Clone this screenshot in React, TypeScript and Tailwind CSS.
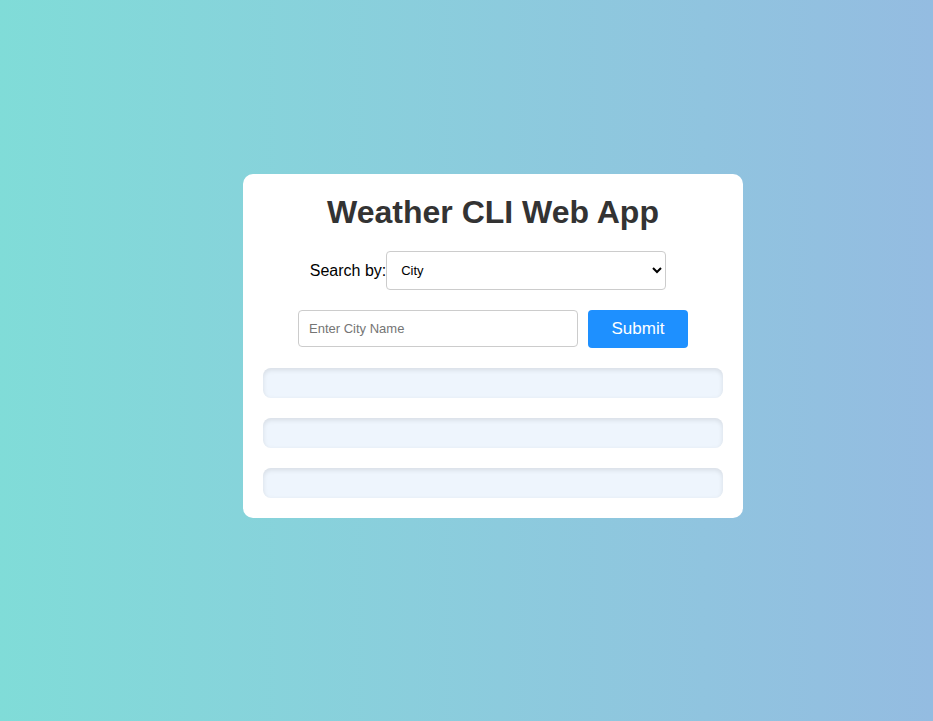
export default function App() {
  return (
    <div
      className="flex h-[721px] w-full items-start justify-center bg-gradient-to-r from-[#80dcd8] to-[#94bce1] pl-[53px] pt-[174px]"
      style={{ fontFamily: '"Liberation Sans", Arial, sans-serif' }}
    >
      <div className="flex w-[500px] flex-col items-center rounded-[10px] bg-white px-5 pb-5 pt-[16px]">
        <h1 className="text-[32px] font-bold leading-[44px] text-[#333]">Weather CLI Web App</h1>

        <div className="mt-[17px] flex items-center">
          <label className="text-base text-black">Search by:</label>
          <select className="mr-[10px] h-[39px] w-[280px] rounded-[4px] border border-[#ccc] bg-white px-[10px] text-[13px] text-black">
            <option>City</option>
          </select>
        </div>

        <div className="mt-[20px] flex items-start gap-[10px]">
          <input
            placeholder="Enter City Name"
            className="h-[37px] w-[280px] rounded-[4px] border border-[#ccc] px-[10px] text-[13px] text-black placeholder:text-[#757575] outline-none"
          />
          <button className="h-[38px] w-[100px] rounded-[4px] bg-[#1e90ff] text-[17px] text-white">Submit</button>
        </div>

        <div className="mt-[20px] flex w-full flex-col gap-5">
          <div className="h-[30px] rounded-[8px] bg-[#eef5fd] shadow-[inset_0_2px_5px_rgba(0,0,0,0.1)]" />
          <div className="h-[30px] rounded-[8px] bg-[#eef5fd] shadow-[inset_0_2px_5px_rgba(0,0,0,0.1)]" />
          <div className="h-[30px] rounded-[8px] bg-[#eef5fd] shadow-[inset_0_2px_5px_rgba(0,0,0,0.1)]" />
        </div>
      </div>
    </div>
  );
}
